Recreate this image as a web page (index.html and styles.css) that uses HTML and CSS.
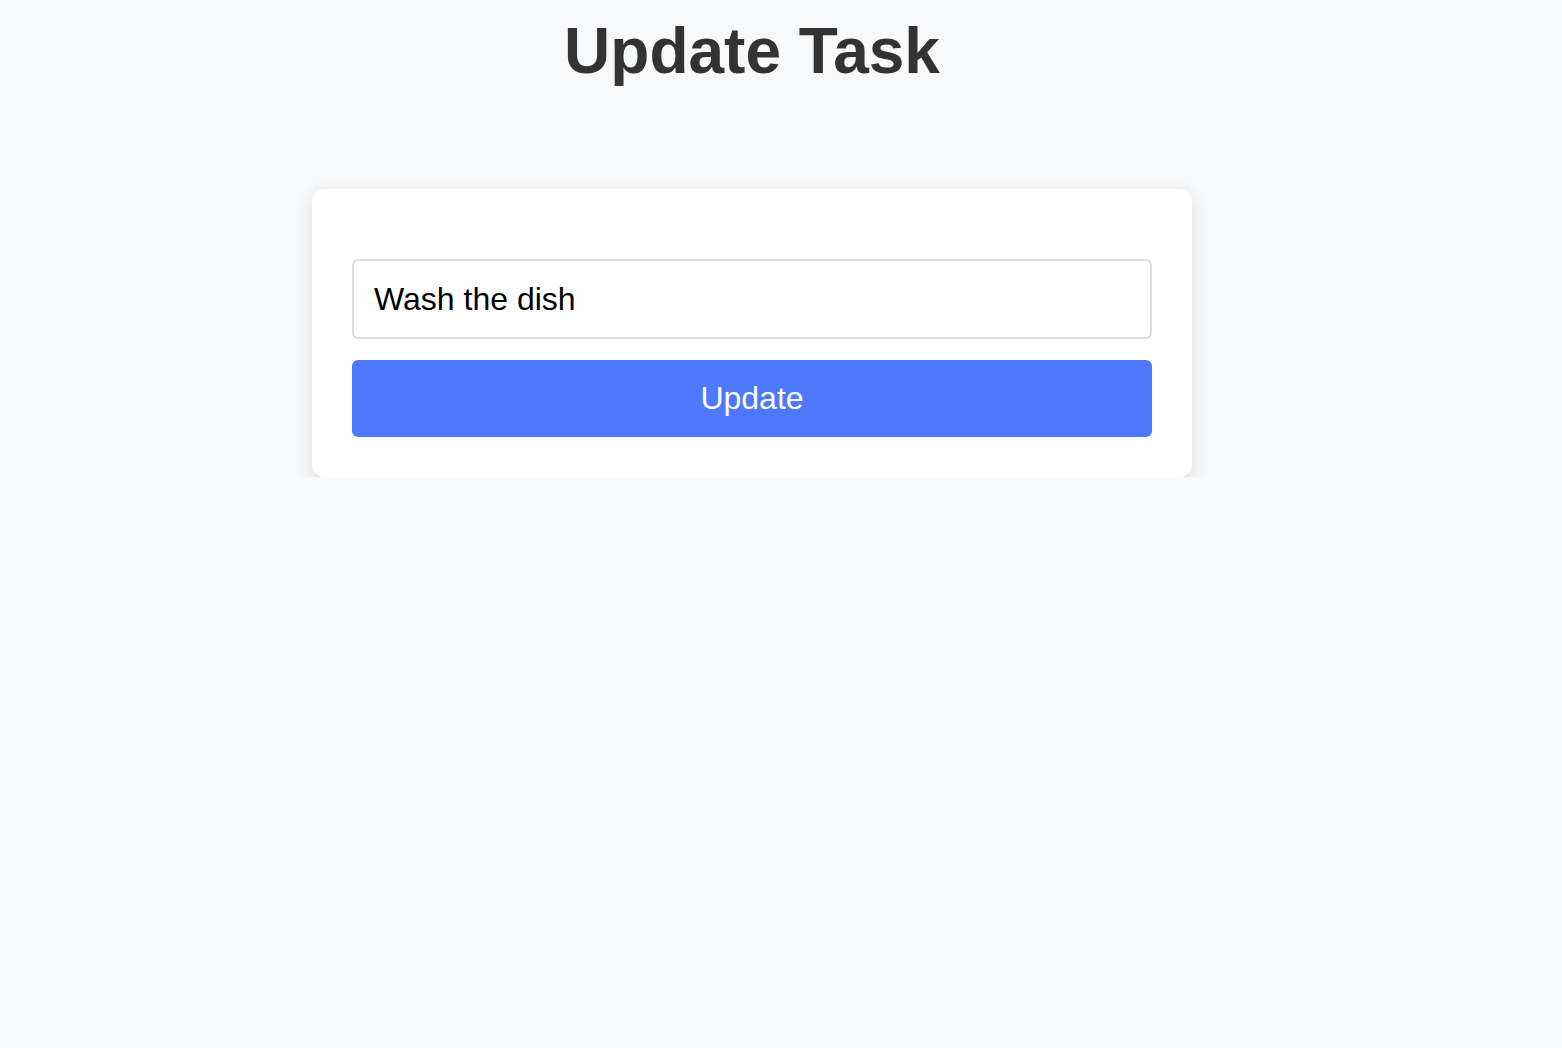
FILE: index.html
```html
<!DOCTYPE html>
<html lang="en">
<head>
<meta charset="utf-8">
<title>Update Task</title>
<link rel="stylesheet" href="styles.css">
</head>
<body>
<main class="page">
  <h1 class="title">Update Task</h1>
  <form class="card">
    <input class="task-input" type="text" value="Wash the dish">
    <button class="update-btn" type="button">Update</button>
  </form>
</main>
</body>
</html>
```
FILE: styles.css
```css
html, body {
  margin: 0;
  padding: 0;
  background: #f8f9fa;
  font-family: "Liberation Sans", Arial, sans-serif;
}

.page {
  width: 1504px;
  display: flex;
  flex-direction: column;
  align-items: center;
}

.title {
  margin: 14px 0 0;
  font-size: 64px;
  font-weight: bold;
  color: #333333;
  line-height: normal;
}

.card {
  box-sizing: border-box;
  width: 880px;
  margin-top: 101px;
  padding: 70px 40px 40px;
  background: #ffffff;
  border-radius: 12px;
  box-shadow: 0 5px 18px rgba(0, 0, 0, 0.12);
  display: flex;
  flex-direction: column;
  gap: 21px;
}

.task-input {
  box-sizing: border-box;
  width: 100%;
  height: 80px;
  padding: 0 20px;
  border: 2px solid #dddddd;
  border-radius: 6px;
  font-family: "Liberation Sans", Arial, sans-serif;
  font-size: 32px;
  color: #000000;
  background: #ffffff;
  outline: none;
}

.update-btn {
  width: 100%;
  height: 77px;
  border: none;
  border-radius: 6px;
  background: #4d78ff;
  color: #ffffff;
  font-family: "Liberation Sans", Arial, sans-serif;
  font-size: 32px;
  cursor: pointer;
}
```
